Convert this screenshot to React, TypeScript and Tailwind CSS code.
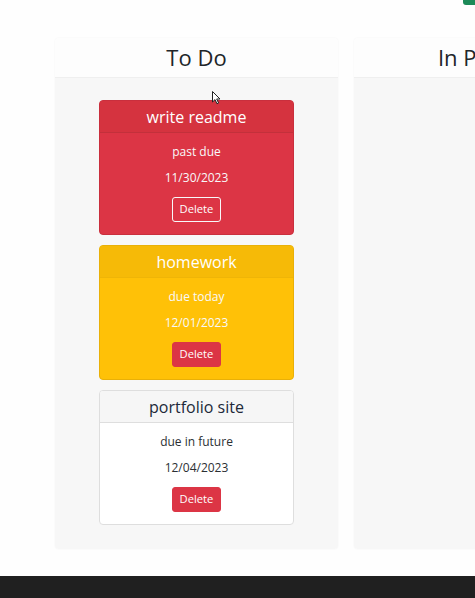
import React from 'react';

type Task = {
    id: string;
    title: string;
    status: string;
    due: string;
    tone: 'danger' | 'warning' | 'plain';
};

const tasks: Task[] = [
    { id: '1', title: 'write readme', status: 'past due', due: '11/30/2023', tone: 'danger' },
    { id: '2', title: 'homework', status: 'due today', due: '12/01/2023', tone: 'warning' },
    { id: '3', title: 'portfolio site', status: 'due in future', due: '12/04/2023', tone: 'plain' },
];

const TaskCard = ({ task }: { task: Task }) => {
    const card =
        task.tone === 'danger'
            ? 'bg-[#dc3545] border-[#c92f3d]'
            : task.tone === 'warning'
            ? 'bg-[#ffc107] border-[#e9b008]'
            : 'bg-white border-[#dedede]';
    const header =
        task.tone === 'danger'
            ? 'bg-[#d5333f] border-[#c3303b] text-white'
            : task.tone === 'warning'
            ? 'bg-[#f6ba07] border-[#efb507] text-white'
            : 'bg-[#f6f6f6] border-[#dedede] text-[#212939]';
    const body = task.tone === 'plain' ? 'text-[#2b2f33]' : 'text-[#f8f9fa]';

    return (
        <div className={`w-[195px] h-[135px] flex flex-col border rounded-[4px] overflow-hidden ${card}`}>
            <div className={`h-[32px] border-b flex items-center justify-center text-[16px] ${header}`}>
                {task.title}
            </div>
            <div className={`flex-1 flex flex-col items-center pt-[9px] text-[12px] ${body}`}>
                <p className="leading-[19px]">{task.status}</p>
                <p className="leading-[19px] mt-[7px]">{task.due}</p>
                {task.tone === 'danger' ? (
                    <button className="mt-[10px] h-[25px] px-[7px] border border-[#f8f9fa] rounded-[3px] text-[11.2px] text-white">
                        Delete
                    </button>
                ) : (
                    <button className="mt-[10px] h-[25px] px-[7px] border border-[#dc3545] bg-[#dc3545] rounded-[3px] text-[11.2px] text-white">
                        Delete
                    </button>
                )}
            </div>
        </div>
    );
};

const Column = ({ title, items }: { title: string; items: Task[] }) => (
    <div className="w-[283px] shrink-0 h-[511px] flex flex-col rounded-[4px] shadow-[0_0_2px_rgba(0,0,0,0.06)] overflow-hidden">
        <div className="h-[40px] bg-[#fdfdfd] border-b border-[#efefef] flex items-center justify-center text-[22px] text-[#212529]">
            {title}
        </div>
        <div className="flex-1 bg-[#f7f7f7] flex flex-col items-center gap-[10px] pt-[22px]">
            {items.map((t) => (
                <TaskCard key={t.id} task={t} />
            ))}
        </div>
    </div>
);

const App = () => {
    return (
        <div
            className="relative w-[475px] h-[598px] overflow-hidden bg-[#fefefe] flex flex-col"
            style={{ fontFamily: '"Open Sans", "Noto Sans", sans-serif' }}
        >
            <div className="h-[38px] flex justify-end items-start">
                <div className="w-[12px] h-[5px] bg-[#1d8a58] rounded-bl-[3px]" />
            </div>

            <div className="flex gap-[16px] pl-[55px]">
                <Column title="To Do" items={tasks} />
                <Column title="In Progress" items={[]} />
            </div>

            <div className="h-[27px]" />
            <div className="flex-1 bg-[#202020]" />

            {/* mouse pointer from the capture */}
            <svg className="absolute left-[212px] top-[91px]" width="9" height="14" viewBox="0 0 9 14">
                <path d="M0.5 0.5 L0.5 11 L3 8.6 L5 12.8 L6.6 12 L4.7 8 L8 8 Z" fill="white" stroke="#222" strokeWidth="1" />
            </svg>
        </div>
    );
};

export default App;
